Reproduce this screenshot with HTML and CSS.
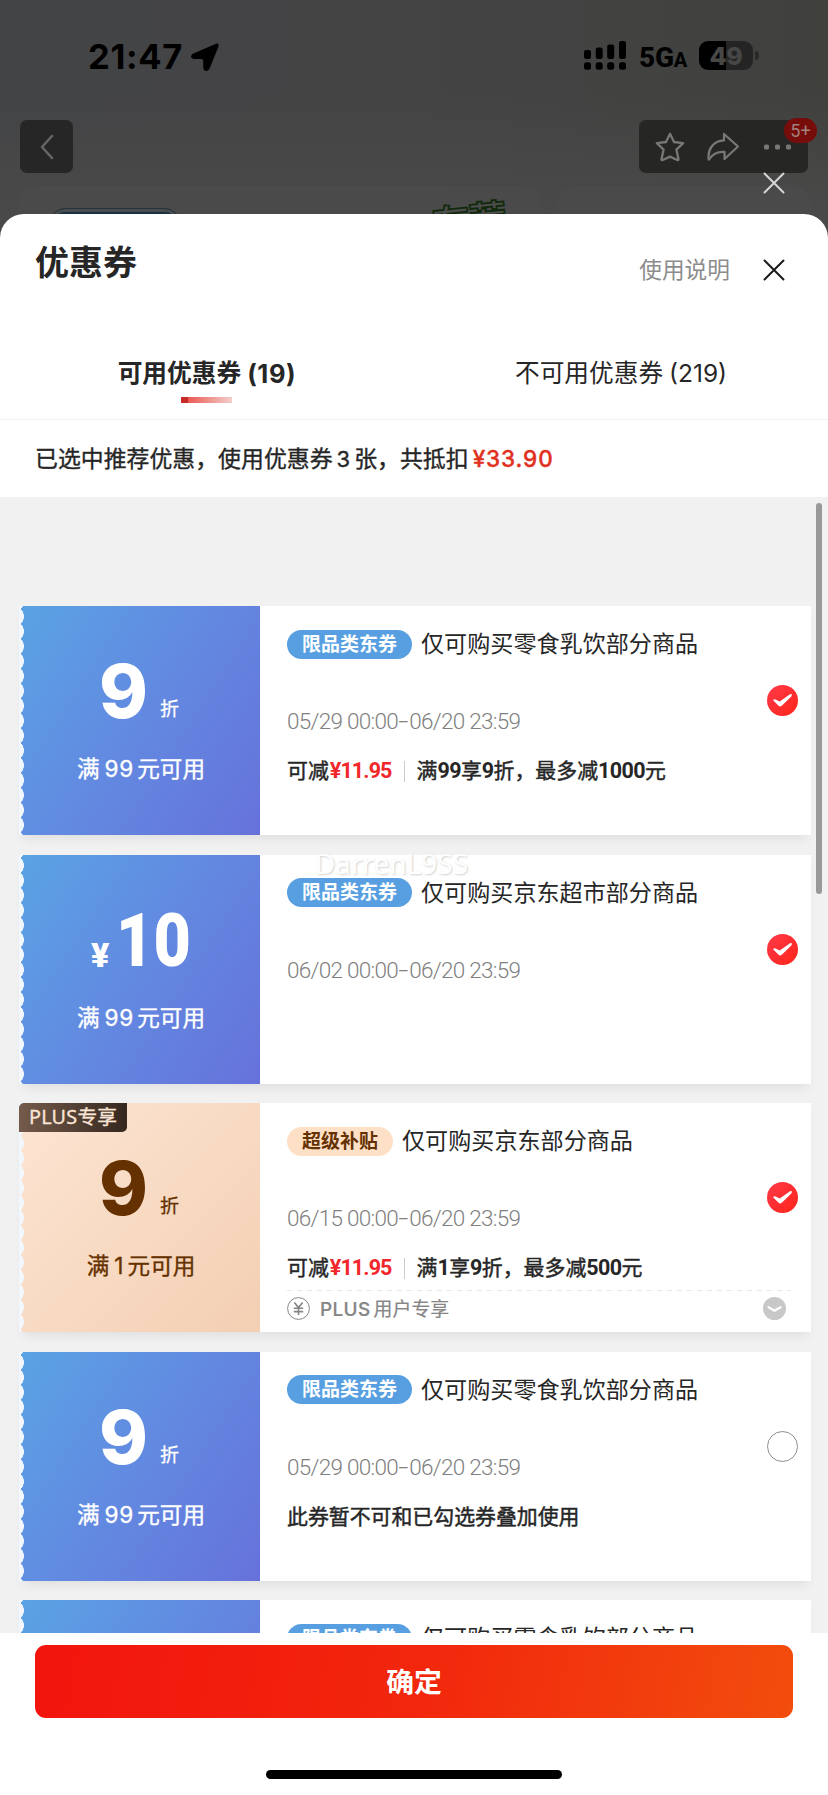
FILE: index.html
```html
<!DOCTYPE html>
<html lang="zh-CN">
<head>
<meta charset="utf-8">
<title>优惠券</title>
<link rel="stylesheet" href="styles.css">
</head>
<body>
<svg width="0" height="0" class="defs" aria-hidden="true">
  <defs>
    <linearGradient id="red" x1="0" y1="0" x2="1" y2="1"><stop offset="0" stop-color="#ff3a4a"/><stop offset="1" stop-color="#ff2419"/></linearGradient>
    <symbol id="check" viewBox="0 0 31 31"><circle cx="15.5" cy="15.5" r="15.5" fill="url(#red)"/><path d="M6.3 15.4 Q6.3 13.6 8.5 14.4 L12.8 16.6 L23 9.2 Q25.8 8.2 24.5 11.2 L14.8 20.8 Q13.2 22.2 11.6 20.8 Z" fill="#fff"/></symbol>
    <symbol id="close" viewBox="0 0 22 22"><path d="M1.5 1.5 L20.5 20.5 M20.5 1.5 L1.5 20.5" fill="none" stroke="currentColor" stroke-width="2" stroke-linecap="round"/></symbol>
  </defs>
</svg>
<div class="screen">
  <header class="backdrop">
    <div class="panel panel-left"></div>
    <div class="panel panel-right"></div>
    <div class="pill-peek"></div>
    <div class="promo-peek">有荐</div>
    <div class="status">
      <span class="time">21:47</span>
      <svg class="loc" viewBox="0 0 28 28"><path d="M25 .8 Q28 -.4 27.6 3.2 L18.4 26 Q16.6 28.6 13.8 27.6 Q12.2 26.6 12.2 24.5 V17.4 Q12 16 10.5 15.9 H2.5 Q-1.2 15 .6 12 Q1.2 11 3 10.2 Z"/></svg>
      <svg class="signal" viewBox="0 0 42 29"><rect x="0" y="9" width="7" height="9" rx="2.2"/><rect x="11.7" y="6.5" width="7" height="11.5" rx="2.2"/><rect x="23.2" y="3.5" width="7" height="14.5" rx="2.2"/><rect x="35" y="0" width="7" height="18" rx="2.2"/><rect x="0" y="21.3" width="7" height="7.5" rx="2.5"/><rect x="11.7" y="21.3" width="7" height="7.5" rx="2.5"/><rect x="23.2" y="21.3" width="7" height="7.5" rx="2.5"/><rect x="35" y="21.3" width="7" height="7.5" rx="2.5"/></svg>
      <span class="net">5G<small>A</small></span>
      <span class="battery"><b>4</b><i>9</i></span><span class="nub"></span>
    </div>
    <nav class="nav">
      <div class="back"><svg width="14" height="26" viewBox="0 0 14 26"><path d="M12 2 L2 13 L12 24" fill="none" stroke="#656566" stroke-width="2.6" stroke-linecap="round" stroke-linejoin="round"/></svg></div>
      <div class="tools">
        <svg viewBox="0 0 30 30"><path d="M15 1.8 L19 10 L28.2 11.2 L21.4 17.6 L23.5 27.2 Q23.6 28.5 22.2 28 L15 24.6 L7.8 28 Q6.4 28.5 6.5 27.2 L8.6 17.6 L1.8 11.2 L11 10 Z" fill="none" stroke="#777" stroke-width="2.3" stroke-linejoin="round"/></svg>
        <svg viewBox="0 0 32 30"><path d="M17 2 L31 14.5 L17.5 27 V20 C10.5 19.3 6 21.5 1.8 27.6 C.2 18 6 8.8 17 8.4 Z" fill="none" stroke="#777" stroke-width="2.3" stroke-linejoin="round"/></svg>
        <svg viewBox="0 0 30 30"><rect x="1" y="12.5" width="5" height="5" rx="1.6" fill="#777"/><rect x="12" y="12.5" width="5" height="5" rx="1.6" fill="#777"/><rect x="23" y="12.5" width="5" height="5" rx="1.6" fill="#777"/></svg>
        <span class="count">5+</span>
      </div>
    </nav>
    <svg class="overlay-close"><use href="#close"/></svg>
  </header>

  <main class="sheet">
    <div class="sheet-head">
      <h1>优惠券</h1>
      <span class="help">使用说明</span>
      <svg class="close"><use href="#close"/></svg>
    </div>
    <div class="tabs">
      <div class="tab active"><span class="t">可用优惠券</span><span class="n">(19)</span></div>
      <div class="tab"><span class="t">不可用优惠券</span><span class="n">(219)</span></div>
    </div>
    <div class="summary">已选中推荐优惠，使用优惠券<span class="three">3</span>张，共抵扣<span class="sum">¥33.90</span></div>

    <section class="list">
      <article class="coupon">
        <div class="value"><div class="amount"><b>9</b><span class="zhe">折</span></div><div class="cond">满<em>99</em>元可用</div></div>
        <div class="info">
          <div class="name"><span class="tag">限品类东券</span><span>仅可购买零食乳饮部分商品</span></div>
          <div class="date">05/29 00:00<u>-</u>06/20 23:59</div>
          <div class="note"><span>可减</span><strong class="save">¥11.95</strong><i></i><span>满<strong>99</strong>享<strong>9</strong>折，最多减<strong>1000</strong>元</span></div>
        </div>
        <svg class="mark"><use href="#check"/></svg>
      </article>
      <article class="coupon">
        <div class="value"><div class="amount money"><span class="yen">¥</span><b>10</b></div><div class="cond">满<em>99</em>元可用</div></div>
        <div class="info">
          <div class="name"><span class="tag">限品类东券</span><span>仅可购买京东超市部分商品</span></div>
          <div class="date">06/02 00:00<u>-</u>06/20 23:59</div>
        </div>
        <svg class="mark"><use href="#check"/></svg>
      </article>
      <article class="coupon plus">
        <div class="value"><span class="ribbon"><span class="lat">PLUS</span>专享</span><div class="amount"><b>9</b><span class="zhe">折</span></div><div class="cond">满<em>1</em>元可用</div></div>
        <div class="info">
          <div class="name"><span class="tag">超级补贴</span><span>仅可购买京东部分商品</span></div>
          <div class="date">06/15 00:00<u>-</u>06/20 23:59</div>
          <div class="note"><span>可减</span><strong class="save">¥11.95</strong><i></i><span>满<strong>1</strong>享<strong>9</strong>折，最多减<strong>500</strong>元</span></div>
          <div class="extra">
            <svg width="23" height="23" viewBox="0 0 23 23"><circle cx="11.5" cy="11.5" r="10.9" fill="none" stroke="#858585"/><path d="M7.4 5.5 L11.5 10.6 L15.6 5.5 M11.5 10.6 V18 M6.8 11.2 H16.2 M6.8 14.6 H16.2" fill="none" stroke="#858585" stroke-width="1.6"/></svg>
            <span class="who"><b>PLUS</b>用户专享</span>
            <svg class="more" width="23" height="23" viewBox="0 0 23 23"><circle cx="11.5" cy="11.5" r="11.5" fill="#c8c8c8"/><path d="M5.5 10.2 L11.5 13.8 L17.5 10.2" fill="none" stroke="#fff" stroke-width="2.2" stroke-linecap="round" stroke-linejoin="round"/></svg>
          </div>
        </div>
        <svg class="mark"><use href="#check"/></svg>
      </article>
      <article class="coupon">
        <div class="value"><div class="amount"><b>9</b><span class="zhe">折</span></div><div class="cond">满<em>99</em>元可用</div></div>
        <div class="info">
          <div class="name"><span class="tag">限品类东券</span><span>仅可购买零食乳饮部分商品</span></div>
          <div class="date">05/29 00:00<u>-</u>06/20 23:59</div>
          <div class="note"><span>此券暂不可和已勾选券叠加使用</span></div>
        </div>
        <span class="mark empty"></span>
      </article>
      <article class="coupon">
        <div class="value"></div>
        <div class="info">
          <div class="name"><span class="tag">限品类东券</span><span>仅可购买零食乳饮部分商品</span></div>
        </div>
      </article>
      <span class="watermark">DarrenL9SS</span>
      <span class="scrollbar"></span>
    </section>

    <footer class="foot">
      <div class="confirm">确定</div>
      <div class="home"></div>
    </footer>
  </main>
</div>
</body>
</html>
```
FILE: styles.css
```css
* { box-sizing: border-box; }
body { margin: 0; background: #fff; color: #262626; font-family: Inter, "Noto Sans CJK SC", sans-serif; }
.defs { position: absolute; }
.screen { width: 828px; height: 1795px; overflow: hidden; display: flex; flex-direction: column; background: #494949; }
h1, em, i { margin: 0; font-style: normal; }
svg { display: block; flex: none; }

/* dimmed page behind the sheet */
.backdrop { position: relative; height: 214px; flex: none; background: linear-gradient(90deg, #434446, #444445 50%, #40413d); }
.backdrop::after { content: ""; position: absolute; inset: 90px 0 -30px; background: linear-gradient(#49494900, #494949 80%); z-index: 0; }
.panel { position: absolute; z-index: 1; top: 186px; height: 60px; background: #4a4a4b; border-radius: 20px; }
.panel-left { left: 18px; width: 523px; }
.panel-right { left: 557px; width: 255px; }
.pill-peek { position: absolute; z-index: 1; left: 50px; top: 208px; width: 130px; height: 30px; border-radius: 30px; border: 1px solid #26333c; background: #1a323f; box-shadow: inset 0 0 0 3px #4a4d50; }
.promo-peek { position: absolute; z-index: 1; left: 432px; top: 196px; font: 700 38px/46px "Noto Sans CJK SC", sans-serif; letter-spacing: -1px; color: #4c4c4c; -webkit-text-stroke: 1.8px #122a0c; transform: rotate(-6deg); white-space: nowrap; }
.status { position: relative; z-index: 2; height: 120px; padding: 41px 69px 0 88px; display: flex; align-items: flex-start; color: #000; }
.time { width: 103px; font: 700 34.5px/31px Inter, sans-serif; letter-spacing: .7px; }
.loc { width: 28px; height: 28px; margin-top: 2px; }
.signal { width: 42px; height: 29px; margin-left: auto; }
.net { width: 49px; margin-left: 13px; margin-right: 11px; font: 800 28px/33px Roboto, sans-serif; white-space: nowrap; letter-spacing: -.2px; }
.net small { font-size: 20px; }
.battery { width: 54px; height: 29px; border-radius: 9px; display: flex; justify-content: center; background: linear-gradient(90deg, #000 50%, #242424 50%); font: 800 25px/30px Inter, sans-serif; letter-spacing: -.5px; }
.battery b { color: #474745; font-weight: 800; }
.battery i { color: #464646; }
.nub { width: 4px; height: 9px; margin: 10px 0 0 2px; border-radius: 0 4px 4px 0; background: #292929; }
.nav { position: relative; z-index: 2; padding: 0 20px 0 20px; display: flex; justify-content: space-between; }
.back { width: 53px; height: 53px; border-radius: 7px; background: #262627; display: flex; align-items: center; justify-content: center; }
.tools { position: relative; width: 169px; height: 53px; border-radius: 7px; background: #262624; display: flex; align-items: center; padding-left: 16px; gap: 22px; }
.tools svg { width: 30px; height: 30px; }
.tools svg:nth-child(2) { width: 32px; }
.tools svg:nth-child(3) { margin-left: 2px; }
.count { position: absolute; left: 145px; top: -2px; width: 33px; height: 25px; border-radius: 13px; background: #770d0b; color: #a2807d; font: 18px/26px Roboto, sans-serif; text-align: center; }
.overlay-close { position: absolute; z-index: 3; left: 763px; top: 172px; width: 22px; height: 22px; color: #d6d6d6; }

/* sheet */
.sheet { position: relative; z-index: 2; height: 1581px; display: flex; flex-direction: column; border-radius: 24px 24px 0 0; background: #fff; overflow: hidden; }
.sheet-head { height: 118px; padding: 32px 43px 0 35px; display: flex; align-items: flex-start; }
h1 { font-size: 34px; line-height: 34px; font-weight: 700; }
.help { margin: 7px 33px 0 auto; font-size: 22.7px; line-height: 34px; color: #8c8c8c; }
.close { width: 22px; height: 22px; margin-top: 13px; color: #1a1a1a; }
.tabs { height: 88px; border-bottom: 1px solid #f2f2f2; display: flex; }
.tab { width: 414px; padding-top: 25px; display: flex; justify-content: center; position: relative; font-size: 24.7px; line-height: 32px; }
.tab .n { margin-left: 6px; font-size: 24.5px; line-height: 33px; }
.active { font-weight: 700; }
.active .n { font-size: 25.5px; letter-spacing: .6px; }
.active::after { content: ""; position: absolute; left: 181px; top: 65px; width: 51px; height: 6px; background: linear-gradient(90deg, #c92a25 7px, #ea5a54 7px, #f3cfcb); }
.summary { height: 77px; padding-left: 35px; font-size: 22.9px; line-height: 77px; -webkit-text-stroke: .35px currentColor; white-space: nowrap; }
.three { margin: 0 4px; font-size: 22px; }
.sum { margin-left: 4px; font-size: 22.5px; font-weight: 500; letter-spacing: .9px; color: #e1301e; }

/* coupon list */
.list { position: relative; height: 1136px; flex: none; padding: 109px 17px 0 20px; background: #f1f1f1; display: flex; flex-direction: column; gap: 19.5px; overflow: hidden; }
.coupon { position: relative; height: 229px; flex: none; display: flex; background: linear-gradient(#fff, #fff) 4px 0 / 100% 100% no-repeat; box-shadow: 0 7px 10px -3px #00000012; }
.value { position: relative; width: 240px; height: 229px; flex: none; padding-top: 56px; color: #fff; background: linear-gradient(123deg, #5aa3e3, #628ae1 48%, #6672da); }
.value::before { content: ""; position: absolute; left: -1px; top: 0; width: 5px; height: 229px; background: radial-gradient(ellipse 5px 8px at 0 50%, #f1f7fd 92%, transparent) 0 3px / 5px 14.9px repeat-y; }
.amount { height: 84px; display: flex; align-items: flex-start; padding-left: 79px; }
.amount b { width: 61px; margin-top: -8px; font: 800 74px/74px Inter, sans-serif; }
.zhe { font-size: 19px; line-height: 28px; margin-top: 34px; -webkit-text-stroke: .3px currentColor; }
.money { padding-left: 71px; }
.money b { width: 80px; font: 900 75px/74px Roboto, sans-serif; margin-left: 2px; transform: scaleX(.86); transform-origin: 0 50%; }
.yen { width: 23px; margin-top: 24px; font: 900 34px/40px Roboto, sans-serif; }
.cond { display: flex; justify-content: center; padding-left: 2px; font-size: 22.6px; line-height: 45px; -webkit-text-stroke: .35px currentColor; }
.cond em { margin: 0 3.5px 0 5px; letter-spacing: .6px; }
.info { width: 531px; padding: 21px 0 0 27px; display: flex; flex-direction: column; align-items: flex-start; }
.name { height: 34px; display: flex; align-items: center; gap: 9px; font-size: 23.1px; line-height: 34px; white-space: nowrap; }
.tag { height: 29px; padding: 0 15px; border-radius: 15px; background: #589fe1; color: #fff; font-size: 19px; line-height: 29px; font-weight: 700; }
.date { height: 30px; margin-top: 45px; font: 300 22.5px/31px Roboto, sans-serif; letter-spacing: -.73px; color: #808080; white-space: pre; }
.date u { display: inline-block; text-decoration: none; transform: scaleX(1.6); margin: 0 3px 0 2.5px; }
.note { height: 34px; margin-top: 18px; display: flex; align-items: center; font-size: 20.9px; line-height: 34px; -webkit-text-stroke: .45px currentColor; white-space: nowrap; }
.note strong { font: 700 21.5px/34px Roboto, sans-serif; letter-spacing: -.6px; -webkit-text-stroke: 0; }
.note .save { margin-left: 1px; color: #f2272b; letter-spacing: -.9px; }
.note i { width: 1px; height: 21px; margin: 0 12px; background: #ccc; }
.mark { position: absolute; left: 747px; top: 79px; width: 31px; height: 31px; }
.empty { border: 1px solid #909090; border-radius: 50%; }
.plus .value { color: #653100; background: linear-gradient(135deg, #fde5d3, #f3cfb3); }
.plus .tag { color: #653100; background: #fde0c6; }
.ribbon { position: absolute; left: -1px; top: 0; width: 108px; height: 29px; border-radius: 5px 0 5px 0; background: linear-gradient(90deg, #745b4b, #35271f); color: #fbe5d6; font-size: 19.8px; line-height: 28px; text-align: center; white-space: nowrap; -webkit-text-stroke: .3px currentColor; }
.ribbon .lat { font-family: "Noto Sans", sans-serif; letter-spacing: .3px; }
.extra { width: 504px; height: 36px; margin-top: 5px; padding-right: 5px; display: flex; align-items: center; gap: 10px; font-size: 18.9px; color: #858585; background: repeating-linear-gradient(90deg, #e8e8e8 0 5px, transparent 5px 10px) 0 0 / 100% 1px no-repeat; }
.who { padding-bottom: 2px; -webkit-text-stroke: .2px currentColor; }
.extra b { font-weight: 500; letter-spacing: .4px; margin-right: 3px; }
.more { margin-left: auto; }
.watermark { position: absolute; left: 315px; top: 346px; font: 28px/40px "Open Sans", sans-serif; color: #fff; text-shadow: 1px 1px 2px #bbb; opacity: .65; }
.scrollbar { position: absolute; left: 816px; top: 6px; width: 6px; height: 391px; border-radius: 3px; background: #999; }

.foot { flex: 1; padding: 12px 35px 0; display: flex; flex-direction: column; align-items: center; background: #fff; }
.confirm { width: 758px; height: 73px; border-radius: 11px; background: linear-gradient(100deg, #f2140d, #f2260d 50%, #f24d0d); color: #fff; font-size: 27.8px; line-height: 74px; font-weight: 700; text-align: center; }
.home { width: 296px; height: 9px; margin-top: 52px; border-radius: 5px; background: #000; }
```
